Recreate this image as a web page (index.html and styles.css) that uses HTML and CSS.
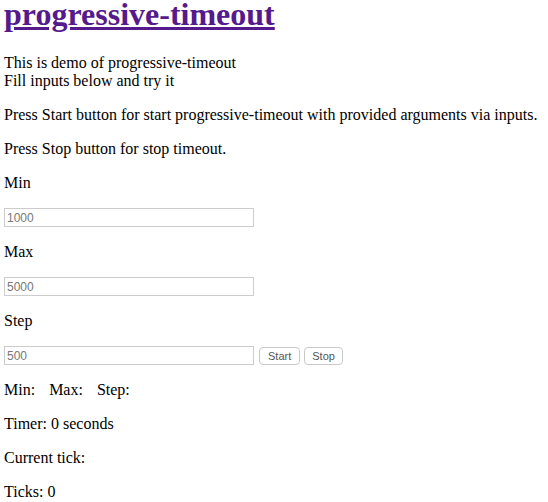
FILE: index.html
```html
<!DOCTYPE html>
<html>
<head>
<meta charset="utf-8">
<link rel="stylesheet" href="styles.css">
</head>
<body class="page">
<h1 class="title"><a class="title-link" href="#">progressive-timeout</a></h1>
<p class="text">This is demo of progressive-timeout<br>Fill inputs below and try it</p>
<p class="text">Press Start button for start progressive-timeout with provided arguments via inputs.</p>
<p class="text">Press Stop button for stop timeout.</p>
<p class="text">Min</p>
<input class="field" type="text" placeholder="1000">
<p class="text">Max</p>
<input class="field" type="text" placeholder="5000">
<p class="text">Step</p>
<div class="row">
<input class="field" type="text" placeholder="500">
<button class="btn btn-first">Start</button>
<button class="btn btn-stop">Stop</button>
</div>
<p class="text stats"><span>Min:</span><span>Max:</span><span>Step:</span></p>
<p class="text">Timer: 0 seconds</p>
<p class="text">Current tick:</p>
<p class="text">Ticks: 0</p>
</body>
</html>
```
FILE: styles.css
```css
.page {
  margin: 0 4px;
  font-family: "Liberation Serif", serif;
  font-size: 16px;
  color: #000;
  background: #fff;
}
.title {
  font-size: 32px;
  font-weight: bold;
  line-height: 29px;
  margin: 0 0 25px;
}
.title-link {
  color: #551a8b;
  text-decoration: underline;
}
.text {
  margin: 16px 0;
  line-height: 18px;
}
.field {
  display: block;
  box-sizing: border-box;
  width: 250px;
  height: 19px;
  margin: 0;
  padding: 1px 2px;
  border: 1px solid #ccc;
  font-family: "Liberation Sans", sans-serif;
  font-size: 12px;
  color: #000;
}
.field::placeholder {
  color: #777;
}
.row {
  display: flex;
  align-items: center;
  gap: 4px;
}
.btn {
  box-sizing: border-box;
  height: 18px;
  padding: 0 8px;
  border: 1px solid #c8c8c8;
  border-radius: 4px;
  background: #fff;
  font-family: "Liberation Sans", sans-serif;
  font-size: 11px;
  color: #555;
}
.btn-first {
  margin-left: 1px;
}
.btn-stop {
  padding: 0 7px;
}
.stats span {
  margin-right: 14px;
}
```
